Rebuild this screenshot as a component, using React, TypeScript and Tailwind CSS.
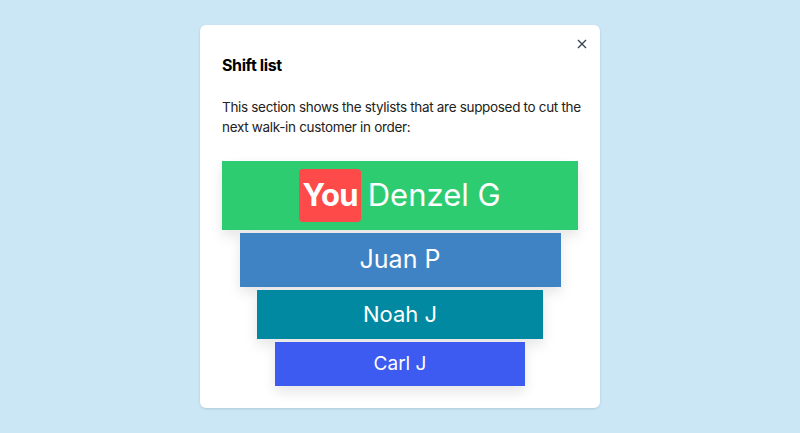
import React from 'react';

const stylists = [
  { name: 'Juan P', color: 'bg-[#3f83c5]', width: 'w-[321px]', height: 'h-[54px]', text: 'text-[25px]' },
  { name: 'Noah J', color: 'bg-[#0089a0]', width: 'w-[286px]', height: 'h-[49px]', text: 'text-[22px]' },
  { name: 'Carl J', color: 'bg-[#3d5af1]', width: 'w-[250px]', height: 'h-[44px]', text: 'text-[19px]' },
];

export default function App() {
  return (
    <div className="w-full h-[433px] bg-[#cbe6f5] flex items-center justify-center" style={{ fontFamily: 'Inter, "Noto Sans", sans-serif' }}>
      <div className="relative w-[400px] h-[383px] bg-white rounded-md shadow-sm px-[22px] pt-[30px]">
        {/* Close button */}
        <button className="absolute top-[11px] right-[10px] w-4 h-4 flex items-center justify-center text-gray-700">
          <svg width="10" height="10" viewBox="0 0 10 10" fill="none" stroke="currentColor" strokeWidth="1.3">
            <path d="M1 1L9 9M9 1L1 9" />
          </svg>
        </button>

        <h2 className="text-[16px] leading-5 font-bold tracking-[-0.4px] text-black">Shift list</h2>
        <p className="mt-[22px] mr-[-10px] text-[13.5px] leading-5 tracking-[-0.32px] text-[#222]">
          This section shows the stylists that are supposed to cut the next walk-in customer in order:
        </p>

        <div className="mt-[24px] flex flex-col items-center gap-[3px]">
          <div className="w-[356px] h-[69px] bg-[#2ecc71] flex items-center justify-center gap-[7px] text-white shadow-[0_6px_12px_rgba(0,0,0,0.1)]">
            <span className="h-[53px] px-[3px] bg-[#ff4a4a] rounded-[4px] flex items-center text-[31px] font-bold tracking-tight">You</span>
            <span className="text-[31px]">Denzel G</span>
          </div>
          {stylists.map((s) => (
            <div
              key={s.name}
              className={`${s.width} ${s.height} ${s.color} flex items-center justify-center text-white ${s.text} shadow-[0_6px_12px_rgba(0,0,0,0.1)]`}
            >
              {s.name}
            </div>
          ))}
        </div>
      </div>
    </div>
  );
}
